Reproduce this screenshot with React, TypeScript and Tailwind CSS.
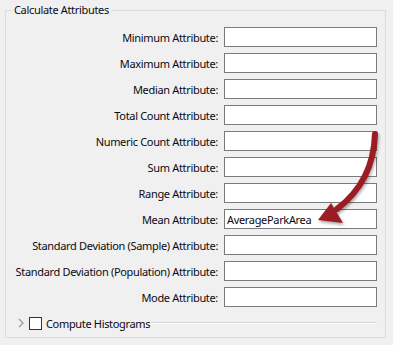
import React from "react";

const rows = [
  "Minimum Attribute:",
  "Maximum Attribute:",
  "Median Attribute:",
  "Total Count Attribute:",
  "Numeric Count Attribute:",
  "Sum Attribute:",
  "Range Attribute:",
  "Mean Attribute:",
  "Standard Deviation (Sample) Attribute:",
  "Standard Deviation (Population) Attribute:",
  "Mode Attribute:",
];

const values: Record<string, string> = {
  "Mean Attribute:": "AverageParkArea",
};

export default function App() {
  return (
    <div
      className="relative w-[393px] h-[345px] bg-[#f0f0f0] pt-[10px] px-[5px] text-[11px] tracking-[-0.33px] text-[#0a0a14] overflow-hidden"
      style={{ fontFamily: '"Noto Sans", "Open Sans", sans-serif' }}
    >
      <div className="relative w-[381px] h-[328px] border border-[#dcdcdc] pt-[16px] pl-[8px]">
        {/* group title sitting on the frame line */}
        <span className="absolute left-[6px] -top-[9px] px-[2px] bg-[#f0f0f0] leading-[16px]">
          Calculate Attributes
        </span>

        <div className="grid grid-cols-[204px_153px] gap-x-[6px] gap-y-[6px]">
          {rows.map((label) => (
            <React.Fragment key={label}>
              <label className="flex items-center justify-end h-[20px] whitespace-nowrap leading-none">
                {label}
              </label>
              <div className="h-[20px] bg-white border border-[#7a7a7a] flex items-center px-[2px] leading-none">
                {values[label] ?? ""}
              </div>
            </React.Fragment>
          ))}
        </div>

        {/* collapsible section header */}
        <div className="flex items-center w-[363px] h-[14px] mt-[9px] pl-[4px]">
          <svg width="6" height="10" viewBox="0 0 6 10" className="mr-[5px]">
            <path d="M1 1 L5 5 L1 9" fill="none" stroke="#a0a0a0" strokeWidth="1.5" />
          </svg>
          <span className="w-[13px] h-[13px] bg-white border border-[#333333] mr-[4px]" />
          <span className="leading-none whitespace-nowrap">Compute Histograms</span>
          <div className="flex-1 ml-[1px] flex flex-col">
            <div className="h-px bg-[#d4d4d4]" />
            <div className="h-px bg-white" />
          </div>
        </div>
      </div>

      {/* red annotation arrow */}
      <svg
        className="absolute left-0 top-0 pointer-events-none"
        width="393"
        height="345"
        style={{ filter: "drop-shadow(1px 2px 1.5px rgba(0,0,0,0.35))" }}
      >
        <path
          d="M375 134 C374 165, 362 190, 337 209"
          fill="none"
          stroke="#9b1c22"
          strokeWidth="6"
          strokeLinecap="round"
        />
        <polygon points="318,220 331,203 343,223" fill="#9b1c22" />
      </svg>
    </div>
  );
}
